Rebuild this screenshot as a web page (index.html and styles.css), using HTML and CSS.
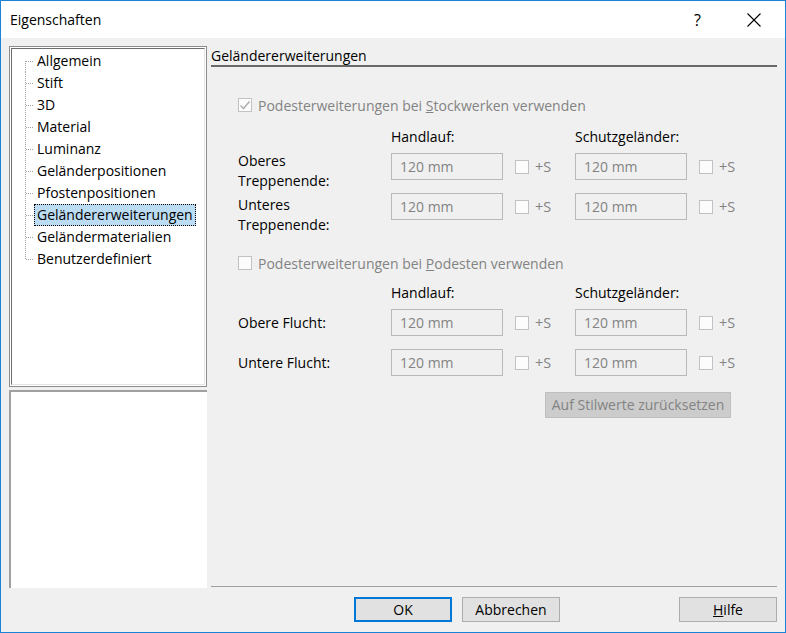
FILE: index.html
```html
<!DOCTYPE html>
<html lang="de">
<head>
  <meta charset="UTF-8">
  <title>Eigenschaften</title>
  <link rel="stylesheet" href="styles.css">
</head>
<body>
  <div class="window">
    <div class="titlebar">
      <span class="title">Eigenschaften</span>
      <span class="caption-btn help">?</span>
      <span class="caption-btn close">
        <svg width="14" height="14" viewBox="0 0 14 14"><path d="M0.5 0.5 L13.5 13.5 M13.5 0.5 L0.5 13.5" stroke="#000" stroke-width="1.1" fill="none"/></svg>
      </span>
    </div>

    <div class="main">
      <div class="left">
        <div class="tree">
          <ul class="tree-inner">
            <li class="first"><span class="branch"></span><span class="node">Allgemein</span></li>
            <li><span class="branch"></span><span class="node">Stift</span></li>
            <li><span class="branch"></span><span class="node">3D</span></li>
            <li><span class="branch"></span><span class="node">Material</span></li>
            <li><span class="branch"></span><span class="node">Luminanz</span></li>
            <li><span class="branch"></span><span class="node">Geländerpositionen</span></li>
            <li><span class="branch"></span><span class="node">Pfostenpositionen</span></li>
            <li><span class="branch"></span><span class="node selected">Geländererweiterungen</span></li>
            <li><span class="branch"></span><span class="node">Geländermaterialien</span></li>
            <li class="last"><span class="branch"></span><span class="node">Benutzerdefiniert</span></li>
          </ul>
        </div>
        <div class="desc"></div>
      </div>

      <div class="right">
        <div class="heading">Geländererweiterungen</div>
        <div class="form">
          <div class="check-row cb1">
            <span class="checkbox checked">
              <svg width="12" height="12" viewBox="0 0 12 12"><path d="M1.5 6.5 L4.5 9.5 L10.5 2.5" stroke="#a8a8a8" stroke-width="1.3" fill="none"/></svg>
            </span>
            <span>Podesterweiterungen bei <u>S</u>tockwerken verwenden</span>
          </div>

          <div class="grid head h1">
            <span></span><span>Handlauf:</span><span></span><span>Schutzgeländer:</span>
          </div>
          <div class="grid row r1">
            <span class="label two">Oberes<br>Treppenende:</span>
            <span class="field">120 mm</span>
            <span class="plus"><span class="checkbox"></span>+S</span>
            <span class="field">120 mm</span>
            <span class="plus"><span class="checkbox"></span>+S</span>
          </div>
          <div class="grid row r2">
            <span class="label two">Unteres<br>Treppenende:</span>
            <span class="field">120 mm</span>
            <span class="plus"><span class="checkbox"></span>+S</span>
            <span class="field">120 mm</span>
            <span class="plus"><span class="checkbox"></span>+S</span>
          </div>

          <div class="check-row cb2">
            <span class="checkbox"></span>
            <span>Podesterweiterungen bei <u>P</u>odesten verwenden</span>
          </div>

          <div class="grid head h2">
            <span></span><span>Handlauf:</span><span></span><span>Schutzgeländer:</span>
          </div>
          <div class="grid row r3">
            <span class="label">Obere Flucht:</span>
            <span class="field">120 mm</span>
            <span class="plus"><span class="checkbox"></span>+S</span>
            <span class="field">120 mm</span>
            <span class="plus"><span class="checkbox"></span>+S</span>
          </div>
          <div class="grid row r4">
            <span class="label">Untere Flucht:</span>
            <span class="field">120 mm</span>
            <span class="plus"><span class="checkbox"></span>+S</span>
            <span class="field">120 mm</span>
            <span class="plus"><span class="checkbox"></span>+S</span>
          </div>

          <div class="reset-row">
            <span class="reset">Auf Stilwerte zurücksetzen</span>
          </div>
        </div>
      </div>
    </div>

    <div class="footer">
      <span class="btn default">OK</span>
      <span class="btn">Abbrechen</span>
      <span class="btn help-btn"><u>H</u>ilfe</span>
    </div>
  </div>
</body>
</html>
```

FILE: styles.css
```css
* {
  box-sizing: border-box;
}
body {
  margin: 0;
  font-family: "Open Sans", "Noto Sans", sans-serif;
  font-size: 14px;
  color: #000;
}
.window {
  width: 786px;
  height: 633px;
  border: 1px solid #1883d7;
  background: #f0f0f0;
  display: flex;
  flex-direction: column;
}

/* title bar */
.titlebar {
  height: 37px;
  background: #fff;
  display: flex;
  align-items: center;
  padding-left: 9px;
}
.title {
  flex: 1;
}
.caption-btn {
  height: 37px;
  display: flex;
  align-items: center;
  justify-content: center;
}
.help {
  width: 51px;
  font-size: 16px;
}
.close {
  width: 62px;
}

/* main area */
.main {
  display: flex;
  gap: 4px;
  padding: 8px 8px 0 8px;
  height: 550px;
}
.left {
  width: 198px;
  display: flex;
  flex-direction: column;
  gap: 3px;
}
.tree {
  height: 341px;
  border: 1px solid #898c91;
  background: #fff;
  padding: 1px;
}
.tree-inner {
  height: 100%;
  margin: 0;
  list-style: none;
  padding: 1px 0 0 13px;
  border-left: 1px solid #6e6e6e;
  border-top: 1px solid #6e6e6e;
  border-right: 1px solid #e3e3e3;
  border-bottom: 1px solid #e3e3e3;
}
.tree-inner li {
  display: flex;
  height: 22px;
}
.branch {
  width: 9px;
  height: 22px;
  background-image:
    repeating-linear-gradient(to bottom, #a0a0a0 0 1px, transparent 1px 2px),
    repeating-linear-gradient(to right, #a0a0a0 0 1px, transparent 1px 2px);
  background-size: 1px 22px, 8px 1px;
  background-position: 0 0, 1px 11px;
  background-repeat: no-repeat;
}
.first .branch {
  background-size: 1px 11px, 8px 1px;
  background-position: 0 11px, 1px 11px;
}
.last .branch {
  background-size: 1px 12px, 8px 1px;
  background-position: 0 0, 1px 11px;
}
.node {
  line-height: 20px;
  padding: 0 2px;
  border: 1px solid transparent;
  white-space: nowrap;
}
.node.selected {
  background: #bcdcf4;
  border: 1px dotted #000;
}
.desc {
  flex: 1;
  background: #fff;
  border-top: 2px solid #a0a0a0;
  border-left: 2px solid #a0a0a0;
}

/* right panel */
.right {
  flex: 1;
  height: 541px;
  border-bottom: 1px solid #a0a0a0;
}
.heading {
  height: 21px;
  line-height: 19px;
  border-bottom: 2px solid #696969;
}
.form {
  padding-left: 27px;
  color: #838383;
}
.check-row {
  display: flex;
  align-items: center;
  gap: 6px;
  height: 20px;
}
.cb1 {
  margin-top: 28px;
}
.cb2 {
  margin-top: 20px;
}
.checkbox {
  width: 14px;
  height: 14px;
  border: 1px solid #c2c2c2;
  background: #fcfcfc;
  display: flex;
  align-items: center;
  justify-content: center;
  flex: none;
}
.grid {
  display: grid;
  grid-template-columns: 153px 112px 72px 112px 60px;
}
.head {
  height: 20px;
  line-height: 20px;
  color: #000;
}
.h1 {
  margin-top: 12px;
}
.h2 {
  margin-top: 10px;
}
.row {
  height: 40px;
  margin: 0;
}
.r1, .r3 {
  margin-top: 6px;
}
.label {
  color: #000;
  height: 27px;
  line-height: 27px;
}
.label.two {
  line-height: 20px;
  margin-top: -2px;
  height: auto;
}
.r2 .label.two {
  margin-top: 2px;
}
.field {
  height: 27px;
  border: 1px solid #b9b9b9;
  padding-left: 8px;
  line-height: 25px;
}
.plus {
  height: 27px;
  display: flex;
  align-items: center;
  gap: 6px;
  padding-left: 12px;
  font-size: 14.5px;
}
.reset-row {
  display: flex;
  justify-content: flex-end;
  padding-right: 46px;
  margin-top: 3px;
}
.reset {
  width: 186px;
  height: 26px;
  line-height: 24px;
  text-align: center;
  background: #cccccc;
  border: 1px solid #bfbfbf;
}

/* footer buttons */
.footer {
  display: flex;
  gap: 10px;
  padding: 9px 8px 0 353px;
}
.btn {
  width: 98px;
  height: 25px;
  line-height: 23px;
  text-align: center;
  background: #e1e1e1;
  border: 1px solid #adadad;
}
.btn.default {
  border: 2px solid #0078d7;
  line-height: 21px;
}
.help-btn {
  margin-left: auto;
}
```
